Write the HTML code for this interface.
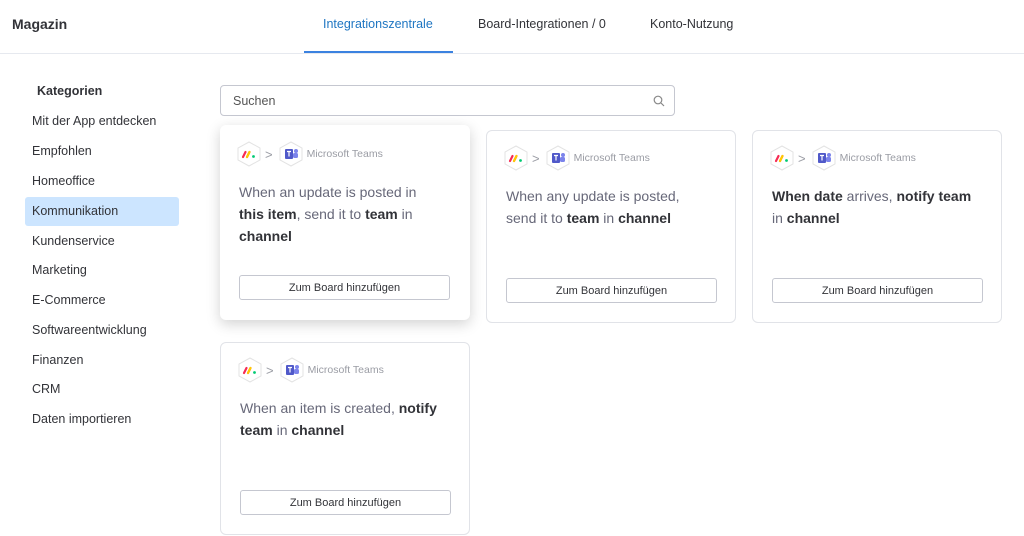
<!DOCTYPE html>
<html><head><meta charset="utf-8"><style>
*{box-sizing:border-box;margin:0;padding:0}
body{width:1024px;height:536px;overflow:hidden;background:#fff;font-family:"Liberation Sans",sans-serif;color:#323338;position:relative}
.abs{position:absolute;white-space:nowrap}
.hdr{position:absolute;left:0;top:0;width:1024px;height:54px;border-bottom:1px solid #e6e9ef}
.tab{font-size:12.5px;top:17px}
.side{font-size:12.5px;left:32px}
.sel{position:absolute;left:25px;top:197px;width:154px;height:29px;background:#cce5ff;border-radius:3px}
.search{position:absolute;left:220px;top:85px;width:455px;height:31px;border:1px solid #c5c7d0;border-radius:4px}
.card{position:absolute;width:250px;border:1px solid #e1e3e8;border-radius:6px;background:#fff}
.card.el{border:none;box-shadow:0 4px 14px rgba(0,0,0,.18)}
.ic{position:absolute;top:14px;left:16px;height:26px;display:flex;align-items:center;font-size:10.5px;color:#9a9ca4}
.hex{width:26px;height:26px}
.txt{position:absolute;left:19px;top:56px;width:200px;font-size:14px;line-height:22px;color:#676879;font-weight:300}
.txt b{color:#323338;font-weight:bold}
.btn{position:absolute;left:19px;width:211px;height:25px;border:1px solid #c5c7d0;border-radius:3px;font-size:11px;text-align:center;line-height:25px;color:#323338}
</style></head><body>
<div class="hdr"></div>
<div class="abs" style="left:12px;top:16px;font-size:14px;font-weight:bold;color:#323338">Magazin</div>
<div class="abs tab" style="left:323px;color:#1f76c2">Integrationszentrale</div>
<div style="position:absolute;left:304px;top:51px;width:149px;height:2px;background:#3b82e0"></div>
<div class="abs tab" style="left:478px">Board-Integrationen / 0</div>
<div class="abs tab" style="left:650px">Konto-Nutzung</div>

<div class="abs" style="left:37px;top:84px;font-size:12.5px;font-weight:bold">Kategorien</div>
<div class="sel"></div>
<div class="abs side" style="top:114px">Mit der App entdecken</div>
<div class="abs side" style="top:144px">Empfohlen</div>
<div class="abs side" style="top:174px">Homeoffice</div>
<div class="abs side" style="top:204px">Kommunikation</div>
<div class="abs side" style="top:234px">Kundenservice</div>
<div class="abs side" style="top:263px">Marketing</div>
<div class="abs side" style="top:293px">E-Commerce</div>
<div class="abs side" style="top:323px">Softwareentwicklung</div>
<div class="abs side" style="top:353px">Finanzen</div>
<div class="abs side" style="top:382px">CRM</div>
<div class="abs side" style="top:412px">Daten importieren</div>

<div class="search"><span class="abs" style="left:12px;top:8px;font-size:12.5px;color:#555">Suchen</span>
<svg class="abs" style="left:432px;top:9px" width="12" height="12" viewBox="0 0 12 12"><circle cx="5" cy="5" r="3.8" fill="none" stroke="#888" stroke-width="1.2"/><path d="M8 8l3 3" stroke="#888" stroke-width="1.2"/></svg></div>

<svg width="0" height="0" style="position:absolute"><defs>
<g id="mon"><polygon points="13,1 24,7 24,19 13,25 2,19 2,7" fill="#fff" stroke="#e3e3e3"/><path d="M7 16l2.5-5M11 16l2.5-5" stroke="#f62b54" stroke-width="2.2" stroke-linecap="round"/><path d="M11 16l2.5-5" stroke="#ffcc00" stroke-width="2.2" stroke-linecap="round"/><circle cx="17.5" cy="15.5" r="1.4" fill="#00ca72"/></g>
<g id="tms"><polygon points="13,1 24,7 24,19 13,25 2,19 2,7" fill="#fff" stroke="#e3e3e3"/><rect x="7" y="8" width="8" height="10" rx="1" fill="#5059c9"/><circle cx="18" cy="10" r="2" fill="#7b83eb"/><rect x="15" y="12" width="5" height="5" rx="1.5" fill="#7b83eb"/><path d="M9 10.5h4M11 10.5v5" stroke="#fff" stroke-width="1.2"/></g>
</defs></svg>

<div class="card el" style="left:220px;top:125px;height:195px">
<div class="ic" style="top:16px"><svg class="hex"><use href="#mon"/></svg><span style="margin:0 5px 0 3px;font-size:13px">&gt;</span><svg class="hex"><use href="#tms"/></svg><span style="margin-left:3px">Microsoft Teams</span></div>
<div class="txt" style="top:56px">When an update is posted in <b>this item</b>, send it to <b>team</b> in <b>channel</b></div>
<div class="btn" style="top:150px">Zum Board hinzufügen</div></div>

<div class="card" style="left:486px;top:130px;height:193px">
<div class="ic"><svg class="hex"><use href="#mon"/></svg><span style="margin:0 5px 0 3px;font-size:13px">&gt;</span><svg class="hex"><use href="#tms"/></svg><span style="margin-left:3px">Microsoft Teams</span></div>
<div class="txt" style="top:54px">When any update is posted, send it to <b>team</b> in <b>channel</b></div>
<div class="btn" style="top:147px">Zum Board hinzufügen</div></div>

<div class="card" style="left:752px;top:130px;height:193px">
<div class="ic"><svg class="hex"><use href="#mon"/></svg><span style="margin:0 5px 0 3px;font-size:13px">&gt;</span><svg class="hex"><use href="#tms"/></svg><span style="margin-left:3px">Microsoft Teams</span></div>
<div class="txt" style="top:54px"><b>When date</b> arrives, <b>notify team</b> in <b>channel</b></div>
<div class="btn" style="top:147px">Zum Board hinzufügen</div></div>

<div class="card" style="left:220px;top:342px;height:193px">
<div class="ic"><svg class="hex"><use href="#mon"/></svg><span style="margin:0 5px 0 3px;font-size:13px">&gt;</span><svg class="hex"><use href="#tms"/></svg><span style="margin-left:3px">Microsoft Teams</span></div>
<div class="txt" style="top:54px">When an item is created, <b>notify team</b> in <b>channel</b></div>
<div class="btn" style="top:147px">Zum Board hinzufügen</div></div>
</body></html>
